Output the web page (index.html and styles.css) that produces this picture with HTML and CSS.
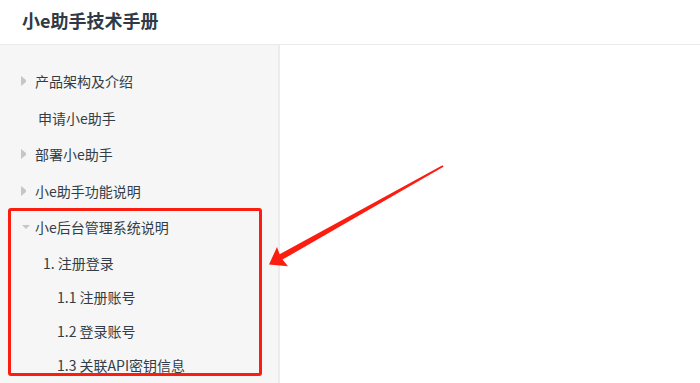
FILE: index.html
```html
<!DOCTYPE html>
<html lang="zh">
<head>
<meta charset="utf-8">
<link rel="stylesheet" href="styles.css">
</head>
<body>
<div class="page">
  <header class="header"><h1 class="title">小e助手技术手册</h1></header>
  <div class="main">
    <nav class="sidebar">
      <ul class="menu">
        <li class="item"><span class="caret right"></span><span class="label">产品架构及介绍</span></li>
        <li class="item plain"><span class="label">申请小e助手</span></li>
        <li class="item"><span class="caret right"></span><span class="label">部署小e助手</span></li>
        <li class="item"><span class="caret right"></span><span class="label">小e助手功能说明</span></li>
        <li class="item"><span class="caret down"></span><span class="label">小e后台管理系统说明</span></li>
        <li class="sub lvl2"><span class="label">1. 注册登录</span></li>
        <li class="sub lvl3"><span class="label">1.1 注册账号</span></li>
        <li class="sub lvl3"><span class="label">1.2 登录账号</span></li>
        <li class="sub lvl3"><span class="label">1.3 关联API密钥信息</span></li>
      </ul>
    </nav>
    <section class="content"></section>
  </div>
  <div class="highlight"></div>
  <svg class="arrow" width="700" height="383" viewBox="0 0 700 383">
    <polygon fill="#fa1d10" points="442.5,165.3 279.6,254.3 277,247 269,264.5 288,266.3 282.5,259.6 443.5,166.7"/>
  </svg>
</div>
</body>
</html>
```
FILE: styles.css
```css
* { box-sizing: border-box; }
html, body { margin: 0; padding: 0; }
body {
  width: 700px;
  height: 383px;
  overflow: hidden;
  background: #fff;
  font-family: "Noto Sans CJK SC", "Liberation Sans", sans-serif;
}
.page { position: relative; width: 700px; height: 383px; display: flex; flex-direction: column; }
.header {
  height: 45px;
  border-bottom: 1px solid #eaeaea;
  display: flex;
  align-items: center;
  padding-left: 22px;
  flex-shrink: 0;
}
.title {
  margin: 0;
  font-size: 18px;
  font-weight: bold;
  color: #2f3a46;
  line-height: 1;
  margin-top: -5px;
}
.main { display: flex; flex: 1; min-height: 0; }
.sidebar {
  width: 280px;
  background: #f6f6f6;
  border-right: 2px solid #ececec;
  flex-shrink: 0;
}
.content { flex: 1; }
.menu { list-style: none; margin: 0; padding: 18px 0 0 0; }
.item, .sub {
  display: flex;
  align-items: center;
  font-size: 14px;
  color: #333d47;
  white-space: nowrap;
}
.item { height: 36.5px; padding-left: 21px; }
.item.plain { padding-left: 38px; }
.sub { height: 34px; }
.lvl2 { padding-left: 43px; }
.lvl3 { padding-left: 57px; }
.caret { width: 14px; height: 10px; display: inline-flex; flex-shrink: 0; }
.caret.right::before {
  content: "";
  border-top: 4px solid transparent;
  border-bottom: 4px solid transparent;
  border-left: 5px solid #c6c6c6;
}
.caret.down { align-items: center; padding-left: 1px; }
.caret.down::before {
  content: "";
  border-left: 4px solid transparent;
  border-right: 4px solid transparent;
  border-top: 4px solid #c6c6c6;
}
.label { line-height: 1; }
.highlight {
  position: absolute;
  left: 8px;
  top: 208px;
  width: 254px;
  height: 168px;
  border: 3px solid #fa1d10;
  border-radius: 3px;
  pointer-events: none;
}
.arrow { position: absolute; left: 0; top: 0; pointer-events: none; }
```
